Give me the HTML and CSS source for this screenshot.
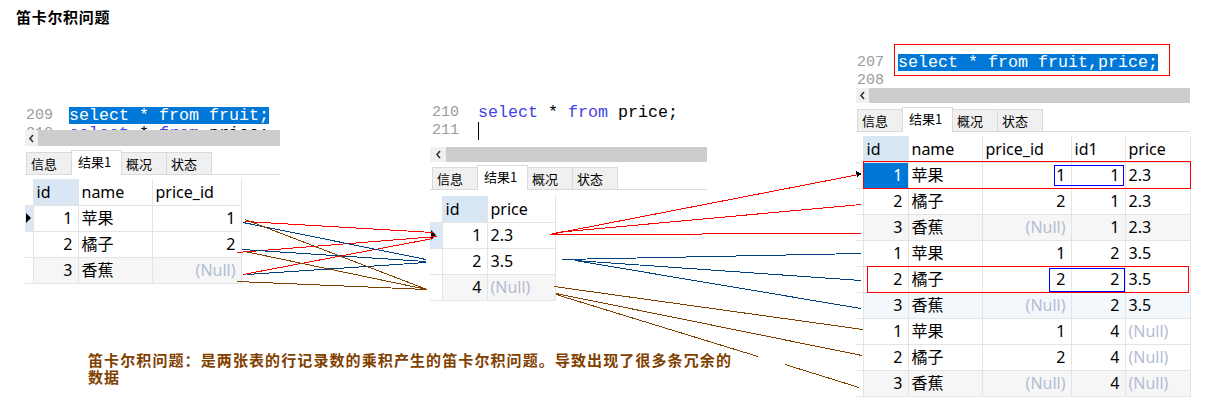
FILE: index.html
```html
<!DOCTYPE html>
<html lang="zh">
<head>
<meta charset="utf-8">
<title>笛卡尔积问题</title>
<link rel="stylesheet" href="styles.css">
</head>
<body>
<div class="canvas">
  <h1 class="title">笛卡尔积问题</h1>

  <!-- screenshot A : fruit -->
  <div class="shot shot-a">
    <div class="code code-a">
      <div class="ln"><span class="num">209</span><span class="sel">select * from fruit;</span></div>
      <div class="ln"><span class="num">210</span><span><span class="kw">select</span> * <span class="kw">from</span> price;</span></div>
    </div>
    <div class="hscroll hscroll-a"><span class="btn"><svg width="7" height="9" viewBox="0 0 7 9"><path d="M5 1 L2 4.5 L5 8" fill="none" stroke="#333" stroke-width="1.6"/></svg></span><span class="thumb"></span></div>
    <div class="tabs"><span class="tab">信息</span><span class="tab active">结果1</span><span class="tab">概况</span><span class="tab">状态</span></div>
    <table class="grid grid-a">
      <colgroup><col class="w-ind-a"><col class="w-id"><col class="w-name"><col class="w-pid"></colgroup>
      <tr class="head"><th class="ind"></th><th class="h-id">id</th><th>name</th><th>price_id</th></tr>
      <tr><td class="ind cur"><span class="tri"></span></td><td class="r">1</td><td>苹果</td><td class="r">1</td></tr>
      <tr><td class="ind"></td><td class="r">2</td><td>橘子</td><td class="r">2</td></tr>
      <tr class="gray"><td class="ind"></td><td class="r">3</td><td>香蕉</td><td class="r null">(Null)</td></tr>
    </table>
  </div>

  <!-- screenshot B : price -->
  <div class="shot shot-b">
    <div class="code code-b">
      <div class="ln"><span class="num">210</span><span><span class="kw">select</span> * <span class="kw">from</span> price;</span></div>
      <div class="ln"><span class="num">211</span><span class="cursor"></span></div>
    </div>
    <div class="hscroll"><span class="btn btn-b"><svg width="7" height="9" viewBox="0 0 7 9"><path d="M5 1 L2 4.5 L5 8" fill="none" stroke="#333" stroke-width="1.6"/></svg></span><span class="thumb"></span></div>
    <div class="tabs tabs-b"><span class="tab">信息</span><span class="tab active">结果1</span><span class="tab">概况</span><span class="tab">状态</span></div>
    <table class="grid grid-b">
      <colgroup><col class="w-ind-b"><col class="w-id"><col class="w-price-b"></colgroup>
      <tr class="head"><th class="ind"></th><th class="h-id">id</th><th>price</th></tr>
      <tr><td class="ind cur"><span class="tri"></span></td><td class="r">1</td><td>2.3</td></tr>
      <tr><td class="ind"></td><td class="r">2</td><td>3.5</td></tr>
      <tr class="gray"><td class="ind"></td><td class="r">4</td><td class="null">(Null)</td></tr>
    </table>
  </div>

  <!-- screenshot C : fruit,price -->
  <div class="shot shot-c">
    <div class="code code-c">
      <div class="ln"><span class="num">207</span><span class="sel">select * from fruit,price;</span></div>
      <div class="ln"><span class="num">208</span><span></span></div>
    </div>
    <div class="hscroll"><span class="btn"><svg width="7" height="9" viewBox="0 0 7 9"><path d="M5 1 L2 4.5 L5 8" fill="none" stroke="#333" stroke-width="1.6"/></svg></span><span class="thumb"></span></div>
    <div class="tabs tabs-c"><span class="tab">信息</span><span class="tab active">结果1</span><span class="tab">概况</span><span class="tab">状态</span></div>
    <table class="grid grid-c">
      <colgroup><col class="w-ind-c"><col class="w-id"><col class="w-name"><col class="w-pid"><col class="w-id1"><col class="w-price-c"></colgroup>
      <tr class="head"><th class="ind"></th><th class="h-id">id</th><th>name</th><th>price_id</th><th>id1</th><th>price</th></tr>
      <tr><td class="ind"></td><td class="r selcell">1</td><td>苹果</td><td class="r">1</td><td class="r">1</td><td>2.3</td></tr>
      <tr><td class="ind"></td><td class="r">2</td><td>橘子</td><td class="r">2</td><td class="r">1</td><td>2.3</td></tr>
      <tr class="gray"><td class="ind"></td><td class="r">3</td><td>香蕉</td><td class="r null">(Null)</td><td class="r">1</td><td>2.3</td></tr>
      <tr><td class="ind"></td><td class="r">1</td><td>苹果</td><td class="r">1</td><td class="r">2</td><td>3.5</td></tr>
      <tr><td class="ind"></td><td class="r">2</td><td>橘子</td><td class="r">2</td><td class="r">2</td><td>3.5</td></tr>
      <tr class="blue"><td class="ind"></td><td class="r">3</td><td>香蕉</td><td class="r null">(Null)</td><td class="r">2</td><td>3.5</td></tr>
      <tr><td class="ind"></td><td class="r">1</td><td>苹果</td><td class="r">1</td><td class="r">4</td><td class="null">(Null)</td></tr>
      <tr><td class="ind"></td><td class="r">2</td><td>橘子</td><td class="r">2</td><td class="r">4</td><td class="null">(Null)</td></tr>
      <tr class="gray"><td class="ind"></td><td class="r">3</td><td>香蕉</td><td class="r null">(Null)</td><td class="r">4</td><td class="null">(Null)</td></tr>
    </table>
  </div>

  <!-- annotation boxes -->
  <div class="mark red m-code"></div>
  <div class="mark red m-row1"></div>
  <div class="mark blue m-b1"></div>
  <div class="mark red m-row5"></div>
  <div class="mark blue m-b2"></div>

  <div class="note">
    <div class="note-line">笛卡尔积问题：是两张表的行记录数的乘积产生的笛卡尔积问题。导致出现了很多条冗余的</div>
    <div class="note-line">数据</div>
  </div>

  <svg class="lines" width="1214" height="418" viewBox="0 0 1214 418" shape-rendering="crispEdges">
    <g stroke="#ff0000" stroke-width="1" fill="none">
      <line x1="245" y1="221.5" x2="433" y2="232.5"/>
      <line x1="237" y1="252.5" x2="437" y2="236.5"/>
      <line x1="243" y1="274.5" x2="433" y2="238.5"/>
      <line x1="550" y1="234.5" x2="859" y2="174.5"/>
      <line x1="556" y1="232.5" x2="861" y2="204.5"/>
      <line x1="550" y1="234.5" x2="861" y2="233.5"/>
    </g>
    <g stroke="#004080" stroke-width="1" fill="none">
      <line x1="243" y1="222.5" x2="426" y2="259.5"/>
      <line x1="242" y1="249.5" x2="426" y2="261.5"/>
      <line x1="247" y1="274.5" x2="426" y2="262.5"/>
      <line x1="562" y1="259.5" x2="861" y2="253.5"/>
      <line x1="575" y1="260.5" x2="861" y2="280.5"/>
      <line x1="575" y1="260.5" x2="861" y2="308.5"/>
    </g>
    <g stroke="#804000" stroke-width="1" fill="none">
      <line x1="245" y1="219.5" x2="427" y2="289.5"/>
      <line x1="245" y1="251.5" x2="427" y2="289.5"/>
      <line x1="237" y1="281.5" x2="427" y2="289.5"/>
      <line x1="554" y1="286.5" x2="863" y2="329.5"/>
      <line x1="556" y1="293.5" x2="862" y2="355.5"/>
      <line x1="556" y1="294.5" x2="758" y2="356.5"/>
      <line x1="785" y1="364.5" x2="859" y2="387.5"/>
    </g>
    <path d="M862 174 L856 171 L857 177 Z" fill="#000"/>
  </svg>
</div>
</body>
</html>
```

FILE: styles.css
```css
* { box-sizing: border-box; }

body {
  margin: 0;
  background: #fff;
  font-family: "Noto Sans", "Noto Sans CJK SC", sans-serif;
  color: #000;
}

.canvas {
  position: relative;
  width: 1214px;
  height: 418px;
  overflow: hidden;
}

.title {
  margin: 0;
  padding: 8px 0 0 16px;
  font: 700 15px/17px "Noto Sans CJK SC", sans-serif;
  letter-spacing: 0.7px;
}

/* pasted screenshots on the canvas */
.shot {
  position: absolute;
  display: flex;
  flex-direction: column;
  align-items: stretch;
}
.shot-a { left: 25px; top: 103px; width: 255px; }
.shot-b { left: 430px; top: 100px; width: 277px; }
.shot-c { left: 856px; top: 50px; width: 334px; }

/* editor */
.code {
  overflow: hidden;
  padding-top: 4px;
  font-family: "Liberation Mono", monospace;
  font-size: 16.67px;
  color: #000;
}
.code-a { height: 27px; }
.code-b { height: 47px; }
.code-c { height: 38px; }

.ln {
  display: flex;
  height: 18px;
  line-height: 17px;
  white-space: pre;
}
.num {
  flex: none;
  font-size: 15px;
  color: #9b9b9b;
}
.code-a .num { width: 44px; padding-left: 1px; }
.code-b .num { width: 48px; padding-left: 2px; }
.code-c .num { width: 42px; padding-left: 1px; }

.sel {
  display: inline-block;
  height: 17px;
  background: #0078d7;
  color: #fff;
}
.kw { color: #4343e6; }
.cursor {
  display: inline-block;
  width: 1px;
  height: 18px;
  background: #000;
}

/* horizontal scrollbar */
.hscroll {
  display: flex;
  height: 15px;
  background: #f0f0f0;
}
.hscroll-a { height: 16px; }
.hscroll .btn {
  flex: none;
  width: 13px;
  display: flex;
  align-items: center;
  justify-content: center;
}
.hscroll .btn-b { width: 16px; }
.hscroll .thumb {
  flex: 1;
  background: #cdcdcd;
}

/* result tabs */
.tabs {
  display: flex;
  align-items: flex-end;
  height: 24px;
  margin-top: 5px;
  padding-left: 1px;
  border-bottom: 1px solid #dadada;
  font-family: "Noto Sans CJK SC", sans-serif;
  font-size: 13px;
}
.tabs-b { margin-top: 4px; padding-left: 2px; }
.tabs-c { margin-top: 5px; padding-left: 1px; }

.tab {
  width: 46px;
  height: 22px;
  padding-left: 4px;
  line-height: 21px;
  background: #f0f0f0;
  border: 1px solid #dadada;
  border-bottom: none;
  margin-right: -1px;
}
.tab.active {
  width: 51px;
  height: 25px;
  margin-bottom: -1px;
  padding-left: 6px;
  line-height: 22px;
  background: #fff;
}

/* grids */
.grid {
  align-self: flex-start;
  border-collapse: collapse;
  table-layout: fixed;
  font-size: 16px;
  margin-top: 4px;
}
.grid-a { width: 216px; }
.grid-b { width: 125px; margin-top: 6px; }
.grid-c { width: 334px; margin-top: 4px; }

.grid th,
.grid td {
  height: 26px;
  padding: 0 5px 0 3px;
  border-right: 1px solid #e4e4e4;
  border-bottom: 1px solid #e4e4e4;
  white-space: nowrap;
  overflow: hidden;
  font-weight: 400;
  text-align: left;
  line-height: 24px;
}
.grid th.h-id { background: #d9e7f5; }

.w-ind-a { width: 8px; }
.w-ind-b { width: 12px; }
.w-ind-c { width: 7px; }
.w-id { width: 45px; }
.w-name { width: 74px; }
.w-pid { width: 89px; }
.w-id1 { width: 54px; }
.w-price-b { width: 68px; }
.w-price-c { width: 65px; }

.grid .ind { padding: 0; background: #fff; }
.tri {
  display: block;
  width: 0;
  height: 0;
  margin-left: 1px;
  border-left: 5px solid #000;
  border-top: 5px solid transparent;
  border-bottom: 5px solid transparent;
}

.grid .r { text-align: right; }
.grid .null { color: #b3bcd3; }
.grid tr.gray td { background: #f6f6f6; }
.grid tr.blue td { background: #f3f8fd; }
.grid tr td.ind { background: #fff; }
.grid tr td.ind.cur { background: #dae8f5; }
.grid td.selcell { background: #0078d7; color: #fff; }

/* annotation overlays */
.mark { position: absolute; border: 1px solid; }
.mark.red { border-color: #ff0000; }
.mark.blue { border-color: #0000ff; }
.m-code { left: 894px; top: 44px; width: 276px; height: 32px; }
.m-row1 { left: 863px; top: 161px; width: 328px; height: 28px; }
.m-b1 { left: 1054px; top: 165px; width: 70px; height: 21px; }
.m-row5 { left: 867px; top: 266px; width: 322px; height: 27px; }
.m-b2 { left: 1049px; top: 268px; width: 76px; height: 24px; }

.note {
  position: absolute;
  left: 88px;
  top: 351px;
  color: #7f4000;
  font: 700 15px/17px "Noto Sans CJK SC", sans-serif;
  letter-spacing: 1.1px;
  white-space: nowrap;
}
.note-line { height: 17px; }

.lines {
  position: absolute;
  left: 0;
  top: 0;
  pointer-events: none;
}
```
